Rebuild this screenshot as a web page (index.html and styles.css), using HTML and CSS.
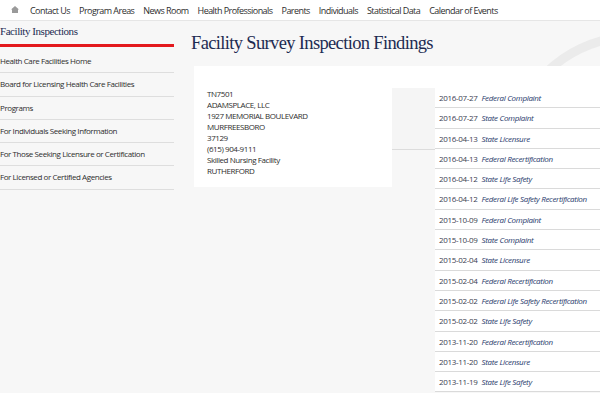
FILE: index.html
```html
<!DOCTYPE html>
<html>
<head>
<meta charset="utf-8">
<link rel="stylesheet" href="styles.css">
</head>
<body>
<header class="topnav">
  <svg class="home" width="8" height="7" viewBox="0 0 8 7"><path d="M4 0 L8 3.4 L7 3.4 L7 7 L1 7 L1 3.4 L0 3.4 Z" fill="#9a9a9a"/></svg>
  <a>Contact Us</a>
  <a>Program Areas</a>
  <a>News Room</a>
  <a>Health Professionals</a>
  <a>Parents</a>
  <a>Individuals</a>
  <a>Statistical Data</a>
  <a>Calendar of Events</a>
</header>
<div class="page">
  <aside class="sidebar">
    <div class="side-title">Facility Inspections</div>
    <ul class="side-links">
      <li>Health Care Facilities Home</li>
      <li>Board for Licensing Health Care Facilities</li>
      <li>Programs</li>
      <li>For Individuals Seeking Information</li>
      <li>For Those Seeking Licensure or Certification</li>
      <li>For Licensed or Certified Agencies</li>
    </ul>
  </aside>
  <main class="main">
    <svg class="watermark" width="120" height="60" viewBox="0 0 120 60"><path d="M52 62 Q85 18 140 10" fill="none" stroke="#ebebeb" stroke-width="9"/><path d="M100 48 L104 40 L108 48 Z" fill="#ebebeb"/></svg>
    <h1 class="title">Facility Survey Inspection Findings</h1>
    <div class="content">
      <div class="card">
        <div>TN7501</div>
        <div>ADAMSPLACE, LLC</div>
        <div>1927 MEMORIAL BOULEVARD</div>
        <div>MURFREESBORO</div>
        <div>37129</div>
        <div>(615) 904-9111</div>
        <div>Skilled Nursing Facility</div>
        <div>RUTHERFORD</div>
      </div>
      <div class="mid">
        <div class="mid-block"></div>
      </div>
      <ul class="list">
        <li><span class="date">2016-07-27</span><span class="type">Federal Complaint</span></li>
        <li><span class="date">2016-07-27</span><span class="type">State Complaint</span></li>
        <li><span class="date">2016-04-13</span><span class="type">State Licensure</span></li>
        <li><span class="date">2016-04-13</span><span class="type">Federal Recertification</span></li>
        <li><span class="date">2016-04-12</span><span class="type">State Life Safety</span></li>
        <li><span class="date">2016-04-12</span><span class="type">Federal Life Safety Recertification</span></li>
        <li><span class="date">2015-10-09</span><span class="type">Federal Complaint</span></li>
        <li><span class="date">2015-10-09</span><span class="type">State Complaint</span></li>
        <li><span class="date">2015-02-04</span><span class="type">State Licensure</span></li>
        <li><span class="date">2015-02-04</span><span class="type">Federal Recertification</span></li>
        <li><span class="date">2015-02-02</span><span class="type">Federal Life Safety Recertification</span></li>
        <li><span class="date">2015-02-02</span><span class="type">State Life Safety</span></li>
        <li><span class="date">2013-11-20</span><span class="type">Federal Recertification</span></li>
        <li><span class="date">2013-11-20</span><span class="type">State Licensure</span></li>
        <li><span class="date">2013-11-19</span><span class="type">State Life Safety</span></li>
      </ul>
    </div>
  </main>
</div>
</body>
</html>
```
FILE: styles.css
```css
* { box-sizing: border-box; }
html, body { margin: 0; padding: 0; }
body {
  background: #f7f7f7;
  font-family: "Open Sans", "DejaVu Sans", sans-serif;
  color: #333;
  width: 600px;
  height: 393px;
  overflow: hidden;
}
.topnav {
  height: 21px;
  background: #fff;
  border-bottom: 1px solid #e6e6e6;
  display: flex;
  align-items: center;
  padding-left: 11px;
}
.home { margin-right: 11px; margin-top: -1px; }
.topnav a {
  font-size: 9px;
  letter-spacing: -0.55px;
  color: #2e2e2e;
  margin-right: 9px;
  white-space: nowrap;
}
.page {
  display: flex;
  align-items: flex-start;
}
.sidebar {
  width: 174px;
  flex: none;
}
.side-title {
  font-family: "Liberation Serif", "Times New Roman", serif;
  font-size: 11px;
  letter-spacing: -0.45px;
  color: #1d2b52;
  height: 26px;
  padding-top: 4px;
  border-bottom: 3px solid #e3191e;
}
.side-links {
  list-style: none;
  margin: 3px 0 0;
  padding: 0;
}
.side-links li {
  height: 23.3px;
  line-height: 22.3px;
  border-bottom: 1px solid #dedede;
  font-size: 8px;
  letter-spacing: -0.42px;
  color: #2e2e2e;
  white-space: nowrap;
}
.main {
  position: relative;
  flex: 1;
  margin-left: 17px;
}
.watermark {
  position: absolute;
  right: 0;
  top: 6px;
  z-index: 0;
}
.title {
  position: relative;
  margin: 0;
  height: 45px;
  padding-top: 12px;
  font-family: "Liberation Serif", "Times New Roman", serif;
  font-weight: normal;
  font-size: 18.5px;
  line-height: 20px;
  letter-spacing: -0.65px;
  color: #1d2b52;
}
.content {
  position: relative;
  z-index: 1;
  display: flex;
  align-items: flex-start;
  margin-left: 3px;
}
.card {
  width: 198px;
  height: 121px;
  background: #fff;
  padding: 22px 13px;
  font-size: 8px;
  line-height: 11px;
  letter-spacing: -0.42px;
  color: #2e2e2e;
  white-space: nowrap;
}
.mid {
  width: 43px;
  flex: none;
  padding-top: 22px;
  background: linear-gradient(#fff, #fff) top / 100% 22px no-repeat;
}
.mid-block {
  height: 62px;
  background: #f5f5f5;
  border-bottom: 1px solid #dcdcdc;
}
.list {
  flex: 1;
  list-style: none;
  margin: 0;
  padding: 22px 0 0;
  background: #fff;
}
.list li {
  height: 20.3px;
  line-height: 19px;
  border-bottom: 1.5px solid #dadada;
  padding-left: 4px;
  font-size: 8px;
  letter-spacing: -0.32px;
  white-space: nowrap;
}
.date {
  color: #3b4150;
  margin-right: 4px;
}
.type {
  font-style: italic;
  color: #283a6c;
}
```
